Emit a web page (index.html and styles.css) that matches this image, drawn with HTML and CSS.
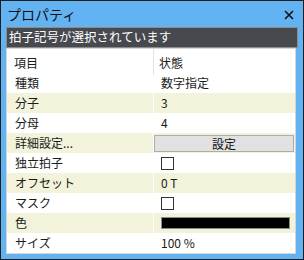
FILE: index.html
```html
<!DOCTYPE html>
<html lang="ja">
<head>
<meta charset="utf-8">
<link rel="stylesheet" href="styles.css">
</head>
<body>
<div class="window">
  <div class="titlebar">
    <span class="title">プロパティ</span>
    <svg class="close" width="10" height="10" viewBox="0 0 10 10"><path d="M1 1L9 9M9 1L1 9" stroke="#111" stroke-width="1.6"/></svg>
  </div>
  <div class="status">拍子記号が選択されています</div>
  <div class="grid">
    <div class="row head"><div class="name">項目</div><div class="val">状態</div></div>
    <div class="row"><div class="name">種類</div><div class="val">数字指定</div></div>
    <div class="row alt"><div class="name">分子</div><div class="val">3</div></div>
    <div class="row"><div class="name">分母</div><div class="val">4</div></div>
    <div class="row alt"><div class="name">詳細設定...</div><div class="val btncell"><div class="btn">設定</div></div></div>
    <div class="row"><div class="name">独立拍子</div><div class="val"><span class="check"></span></div></div>
    <div class="row alt"><div class="name">オフセット</div><div class="val">0 T</div></div>
    <div class="row"><div class="name">マスク</div><div class="val"><span class="check"></span></div></div>
    <div class="row alt"><div class="name">色</div><div class="val"><span class="swatch"></span></div></div>
    <div class="row"><div class="name">サイズ</div><div class="val">100 %</div></div>
  </div>
</div>
</body>
</html>
```
FILE: styles.css
```css
html, body { margin: 0; padding: 0; }
body { font-family: "Noto Sans CJK JP", "Noto Sans", sans-serif; font-size: 12px; color: #1a1a1a; }
.window {
  width: 304px; height: 260px; box-sizing: border-box;
  border: 1px solid #1e1e1e; background: #63b3f3;
  display: flex; flex-direction: column;
  padding: 0 5px 5px 5px;
}
.titlebar {
  height: 26px; display: flex; align-items: center; justify-content: space-between;
  padding: 0 4px 0 1px;
}
.title { font-size: 14px; color: #111; line-height: 1; }
.close { margin-top: 2px; }
.status {
  height: 21px; box-sizing: border-box; border: 1px solid #8c8c8c;
  background: #464a4f; color: #fff; line-height: 18px; padding-left: 2px;
  font-size: 12.5px;
}
.grid {
  margin-right: 2px; background: #fff; border: 1px solid #d6d6d6;
  flex: 1; display: flex; flex-direction: column;
}
.row { height: 20px; display: grid; grid-template-columns: 146px 1px 1fr; }
.row .name { grid-column: 1; padding-left: 8px; line-height: 20px; }
.row .val { grid-column: 3; padding-left: 7px; line-height: 20px; display: flex; align-items: center; }
.row.alt .name, .row.alt .val { background: #f3f3dc; }
.row.head { height: 24px; }
.row.head .name, .row.head .val { line-height: 24px; padding-top: 2px; box-sizing: border-box; }
.row.head .name { padding-left: 7px; border-right: 1px solid #e4e4e4; }
.row.head .val { padding-left: 5px; }
.row.head .name { grid-column: 1 / 3; }
.btncell { padding: 2px 1px 1px 0 !important; }
.btn {
  flex: 1; height: 17px; box-sizing: border-box; border: 1px solid #adadad;
  background: #e1e1e1; text-align: center; line-height: 15px; color: #111;
}
.check { width: 13px; height: 13px; box-sizing: border-box; border: 1px solid #333; background: #fff; display: inline-block; }
.swatch { width: 129px; height: 12px; box-sizing: border-box; border: 1px solid #8a8a8a; background: #000; display: inline-block; }
```
